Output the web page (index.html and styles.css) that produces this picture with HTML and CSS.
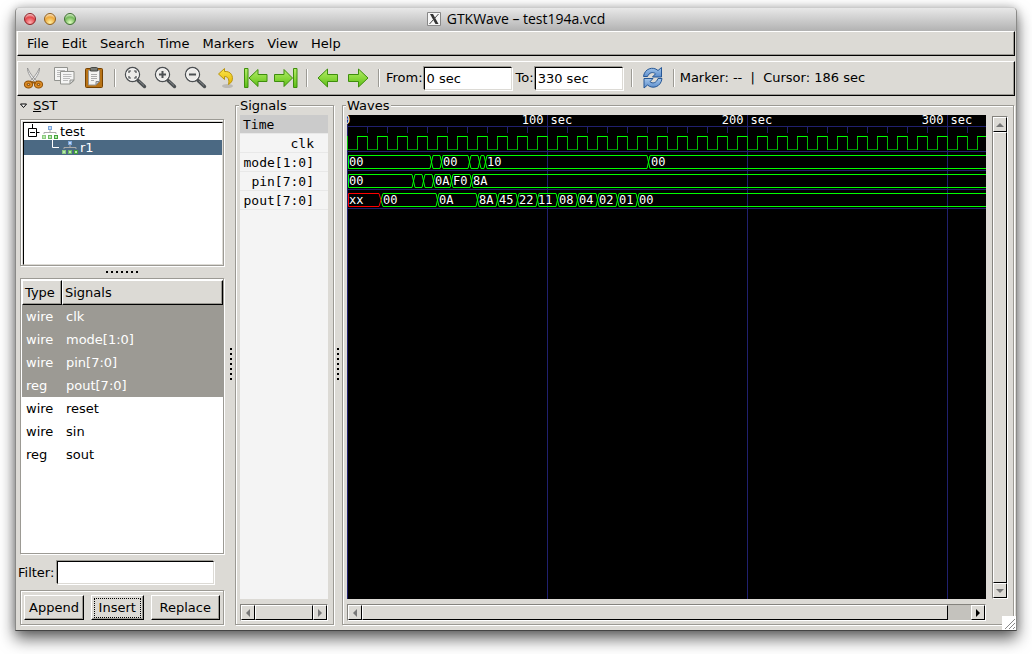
FILE: index.html
```
<!DOCTYPE html>
<html lang="en">
<head>
<meta charset="utf-8">
<title>GTKWave – test194a.vcd</title>
<link rel="stylesheet" href="styles.css">
</head>
<body>
<svg class="defs" width="0" height="0" aria-hidden="true">
  <defs>
    <linearGradient id="green" x1="0" y1="0" x2="0" y2="1"><stop offset="0" stop-color="#b4ec6c"/><stop offset=".5" stop-color="#8ad83c"/><stop offset="1" stop-color="#5cbc18"/></linearGradient>
    <linearGradient id="yellow" x1="0" y1="0" x2="0" y2="1"><stop offset="0" stop-color="#fbe84e"/><stop offset="1" stop-color="#e5b400"/></linearGradient>
    <linearGradient id="blue" x1="0" y1="0" x2="0" y2="1"><stop offset="0" stop-color="#a4c6ea"/><stop offset="1" stop-color="#5b8ccc"/></linearGradient>
    <g id="lens">
      <path d="M14 14.500L20.500 20.500" stroke="#4c5052" stroke-width="3.400" stroke-linecap="round"/>
      <path d="M15 15L20 19.500" stroke="#85898b" stroke-width="1"/>
      <circle cx="8.500" cy="8.500" r="7" fill="#ecebe8" stroke="#4c5052" stroke-width="1.400"/>
      <circle cx="8.500" cy="8.500" r="5.900" fill="none" stroke="#fff" stroke-width=".8"/>
    </g>
    <g id="tree">
      <rect x="6" width="4" height="4" fill="#7ba6dc"/><rect x="7" y="1" width="2" height="2" fill="#c5dcf6"/>
      <path d="M8 4v3M2 8V6.500H14V8" fill="none" stroke="#aaa"/>
      <path d="M0 9h4v4H0z" fill="#8ccb80"/><path d="M6 9h4v4H6z" fill="#6bb860"/><path d="M12 9h4v4h-4z" fill="#43a33b"/>
      <path d="M1 10h2v2H1zM7 10h2v2H7zM13 10h2v2h-2z" fill="#b9e8ae"/>
    </g>
  </defs>
</svg>
<div class="window">
  <header class="titlebar">
    <div class="lights">
      <button class="light red" aria-label="Close"></button>
      <button class="light amber" aria-label="Minimize"></button>
      <button class="light lime" aria-label="Zoom"></button>
    </div>
    <h1 class="title">
      <svg width="14" height="14" viewBox="0 0 14 14" aria-hidden="true"><path d="M.5.500h13v13H.5z" fill="#f6f6f6" stroke="#888"/><path d="M3 2h3l5.500 10h-3z" fill="#333"/><path d="M11.500 2L2.500 12" stroke="#444"/></svg>
      GTKWave – test194a.vcd
    </h1>
  </header>

  <nav class="menubar" aria-label="Menu">
    <button>File</button><button>Edit</button><button>Search</button><button>Time</button><button>Markers</button><button>View</button><button>Help</button>
  </nav>

  <div class="toolbar">
    <button class="tool" aria-label="Cut"><svg viewBox="0 0 24 24"><path d="M5.500 2C5 6 9 13 14 17l1.500-1C12 12 8 8 5.500 2zM17.500 2C18 6 14 13 9 17l-1.500-1C11 12 15 8 17.500 2z" fill="#eee" stroke="#888" stroke-width=".8"/><g fill="none" stroke="#8b4c05" stroke-width="3.600"><ellipse cx="6.500" cy="18.500" rx="2.800" ry="2.200"/><ellipse cx="16.500" cy="18.500" rx="2.800" ry="2.200"/></g><g fill="none" stroke="#d98a25" stroke-width="1.800"><ellipse cx="6.500" cy="18.500" rx="2.800" ry="2.200"/><ellipse cx="16.500" cy="18.500" rx="2.800" ry="2.200"/></g><path d="M9 16l5 1" stroke="#9c5a0c" stroke-width="2"/></svg></button>
    <button class="tool" aria-label="Copy"><svg viewBox="0 0 24 24"><g fill="#f5f5f4" stroke="#92938f"><path d="M2.500 1.500h13v13h-13z"/><path d="M8.500 5.500h13.500v9l-4 3.500H8.500z"/></g><path d="M5 4.500h8M5 6.500h3M5 8.500h3M5 10.500h3M11 8.500h8.500M11 10.500h8.500M11 12.500h7M11 14.500h5" stroke="#bbb"/><path d="M18 18v-4h4z" fill="#ddd" stroke="#92938f"/></svg></button>
    <button class="tool" aria-label="Paste"><svg viewBox="0 0 24 24"><rect x="3.500" y="2.500" width="17" height="19" rx="1" fill="#b87316" stroke="#744102"/><path d="M6.500 4.500h11v11l-3.500 3.500H6.500z" fill="#f4f4f2" stroke="#999"/><path d="M8.500 3.500V2.500q0-1 1-1h5q1 0 1 1v2.500h-7z" fill="#777a75" stroke="#484a47"/><path d="M9 8.500h6M9 10.500h6M9 12.500h6M9 14.500h3" stroke="#aaa"/><path d="M14 19v-3.500h3.500z" fill="#ccc" stroke="#888"/></svg></button>
    <span class="sep"></span>
    <button class="tool" aria-label="Zoom fit"><svg viewBox="0 0 24 24"><use href="#lens"/><path d="M5 7V5H7M10 5h2v2M12 10v2h-2M7 12H5v-2" fill="none" stroke="#4c5052" stroke-width="1.200"/></svg></button>
    <button class="tool" aria-label="Zoom in"><svg viewBox="0 0 24 24"><use href="#lens"/><path d="M5 8.500h7M8.500 5v7" stroke="#4c5052" stroke-width="2"/></svg></button>
    <button class="tool" aria-label="Zoom out"><svg viewBox="0 0 24 24"><use href="#lens"/><path d="M5 8.500h7" stroke="#4c5052" stroke-width="2"/></svg></button>
    <button class="tool" aria-label="Zoom undo"><svg viewBox="0 0 24 24"><ellipse cx="13.500" cy="20" rx="5.500" ry="2" fill="#000" opacity=".15"/><path d="M4.500 8L10.500 2.500V5.500C17 5 19.500 10 18 15q-1 2-3.500 3.500C15.500 14 14.500 10.500 10.500 10.500V13.500z" fill="url(#yellow)" stroke="#b99510"/></svg></button>
    <button class="tool" aria-label="Go to start"><svg viewBox="0 0 24 24"><g fill="url(#green)" stroke="#3e8e0c"><path d="M.5 2.500h3.500v19H.5z"/><path d="M5 12L14 3.500v5h9v7h-9v5z"/></g></svg></button>
    <button class="tool" aria-label="Go to end"><svg viewBox="0 0 24 24"><g fill="url(#green)" stroke="#3e8e0c"><path d="M19.500 2.500H23v19h-3.500z"/><path d="M18.500 12L10 3.500v5H.5v7H10v5z"/></g></svg></button>
    <span class="sep"></span>
    <button class="tool" aria-label="Previous edge"><svg viewBox="0 0 24 24"><path d="M2 12l9.500-9v5.500h10v7h-10V21z" fill="url(#green)" stroke="#3e8e0c"/></svg></button>
    <button class="tool" aria-label="Next edge"><svg viewBox="0 0 24 24"><path d="M22 12l-9.500-9v5.500h-10v7h10V21z" fill="url(#green)" stroke="#3e8e0c"/></svg></button>
    <span class="sep"></span>
    <label for="from">From:</label><input id="from" class="entry time" type="text" value="0 sec">
    <label for="to">To:</label><input id="to" class="entry time" type="text" value="330 sec">
    <span class="sep"></span>
    <button class="tool" aria-label="Reload"><svg viewBox="0 0 24 24"><g fill="url(#blue)" stroke="#275795"><path d="M2.500 10.500C3.500 2.500 12 0 17 4.500L20.500 1.500V11h-9l3-3.200C12 5.500 8 6.500 6.500 10.500z"/><path d="M21 12.500C20 21 11.500 23.500 6.500 19L3 22V12.500h9L9 15.700C11.500 18 15.500 17 17 12.500z"/></g></svg></button>
    <span class="sep"></span>
    <output class="status">Marker: --&nbsp; |&nbsp; Cursor: 186 sec</output>
  </div>

  <main class="workspace">
    <aside class="side">
      <h2 class="sst"><svg width="9" height="6" viewBox="0 0 9 6" aria-hidden="true"><path d="M1.500 1h6L4.500 4.500z" fill="#fff" stroke="#000"/></svg><span><u>S</u>ST</span></h2>
      <div class="frame tree-frame">
        <ul class="tree">
          <li><svg width="12" height="16" viewBox="0 0 12 16" aria-hidden="true"><path d="M4.500 0v4M.5 4.500h8v8h-8zM2 8.500h5M9 8.500h2.500" fill="none" stroke="#000"/></svg><svg width="16" height="13"><use href="#tree"/></svg>test</li>
          <li class="chosen child"><svg width="8" height="16" viewBox="0 0 8 16" aria-hidden="true"><path d="M.5 0v7.500H7" fill="none" stroke="#fff"/></svg><svg width="16" height="13"><use href="#tree"/></svg>r1</li>
        </ul>
      </div>
      <div class="grip across"></div>
      <div class="frame list-frame">
        <table class="list">
          <thead><tr><th class="type">Type</th><th>Signals</th></tr></thead>
          <tbody>
            <tr class="picked"><td>wire</td><td>clk</td></tr>
            <tr class="picked"><td>wire</td><td>mode[1:0]</td></tr>
            <tr class="picked"><td>wire</td><td>pin[7:0]</td></tr>
            <tr class="picked"><td>reg</td><td>pout[7:0]</td></tr>
            <tr><td>wire</td><td>reset</td></tr>
            <tr><td>wire</td><td>sin</td></tr>
            <tr><td>reg</td><td>sout</td></tr>
          </tbody>
        </table>
      </div>
      <div class="filter"><label for="filter">Filter:</label><input id="filter" class="entry" type="text"></div>
      <div class="actions frame">
        <button class="push">Append</button><button class="push focused"><span>Insert</span></button><button class="push">Replace</button>
      </div>
    </aside>

    <div class="grip down"></div>

    <section class="group names-group">
      <h2>Signals</h2>
      <div class="names">
        <div class="name head">Time</div>
        <div class="name">clk</div>
        <div class="name">mode[1:0]</div>
        <div class="name">pin[7:0]</div>
        <div class="name">pout[7:0]</div>
      </div>
      <div class="scroll flat">
        <button class="arrow" aria-label="Scroll left"><svg width="6" height="8"><path d="M5 0v8L1 4z" fill="#777"/></svg></button>
        <span class="thumb"></span>
        <button class="arrow" aria-label="Scroll right"><svg width="6" height="8"><path d="M1 0v8l4-4z" fill="#777"/></svg></button>
      </div>
    </section>

    <div class="grip down"></div>

    <section class="group waves-group">
      <h2>Waves</h2>
      <svg class="waves" role="img" aria-label="Waveforms">
        <defs>
          <pattern id="tick" width="20" height="7" y="11" patternUnits="userSpaceOnUse"><path d="M0 .5h20M.5 0v7" stroke="#20206e"/></pattern>
          <pattern id="clock" width="20" height="15" y="21" patternUnits="userSpaceOnUse"><path d="M0 13.500h11" stroke="#008e00"/><path d="M10.500 0v14M.5 0v14" stroke="#00c000"/><path d="M10 .5h10.500" stroke="#0f0"/></pattern>
          <pattern id="grid" width="200" height="20" patternUnits="userSpaceOnUse"><path d="M.5 0v20" stroke="#20206e"/></pattern>
        </defs>
        <rect width="100%" height="100%" fill="#000"/>
        <rect width="100%" height="100%" fill="url(#grid)"/>
        <rect y="11" width="100%" height="7" fill="url(#tick)"/>
        <path d="M0 36.500H4000M0 55.500H4000M0 74.500H4000M0 93.500H4000" stroke="#20206e"/>
        <rect y="21" width="100%" height="14" fill="url(#clock)"/>
        <g class="bus">
          <path d="M1.500 53.500V40.500H83l3 13H93l3-13H121l3 13H131l3-13H137l3 13H300l3-13H4000"/>
          <path d="M1.500 53.500H83l3-13H93l3 13H121l3-13H131l3 13H137l3-13H300l3 13H4000"/>
          <path d="M1.500 72.500V59.500H65l3 13H75l3-13H85l3 13H103l3-13H123l3 13H4000"/>
          <path d="M1.500 72.500H65l3-13H75l3 13H85l3-13H103l3 13H123l3-13H4000"/>
          <path d="M34 85l2-6.500H89l3 13H129l3-13H149l3 13H169l3-13H189l3 13H209l3-13H229l3 13H249l3-13H269l3 13H289l3-13H4000"/>
          <path d="M34 85l2 6.500H89l3-13H129l3 13H149l3-13H169l3 13H189l3-13H209l3 13H229l3-13H249l3 13H269l3-13H289l3 13H4000"/>
          <path class="unknown" d="M1.500 78.500H32l2 6.500-2 6.500H1.500z"/>
        </g>
        <g class="values">
          <text x="-4" y="9">0</text>
          <text class="mid" x="200" y="9">100 sec</text>
          <text class="mid" x="400" y="9">200 sec</text>
          <text class="mid" x="600" y="9">300 sec</text>
          <text x="2" y="51">00</text><text x="96" y="51">00</text><text x="140" y="51">10</text><text x="304" y="51">00</text>
          <text x="2" y="70">00</text><text x="88" y="70">0A</text><text x="106" y="70">F0</text><text x="126" y="70">8A</text>
          <text x="2" y="89">xx</text><text x="36" y="89">00</text><text x="92" y="89">0A</text><text x="132" y="89">8A</text><text x="152" y="89">45</text><text x="172" y="89">22</text><text x="191" y="89">11</text><text x="212" y="89">08</text><text x="232" y="89">04</text><text x="252" y="89">02</text><text x="272" y="89">01</text><text x="292" y="89">00</text>
        </g>
      </svg>
      <div class="scroll upright">
        <button class="arrow" aria-label="Scroll up"><svg width="8" height="6"><path d="M0 5h8L4 1z" fill="#777"/></svg></button>
        <span class="thumb"></span>
        <button class="arrow" aria-label="Scroll down"><svg width="8" height="6"><path d="M0 1h8L4 5z" fill="#777"/></svg></button>
      </div>
      <div class="scroll flat">
        <button class="arrow" aria-label="Scroll left"><svg width="6" height="8"><path d="M5 0v8L1 4z" fill="#777"/></svg></button>
        <span class="thumb"></span><span class="trough"></span>
        <button class="arrow" aria-label="Scroll right"><svg width="6" height="8"><path d="M1 0v8l4-4z" fill="#000"/></svg></button>
      </div>
    </section>
  </main>
  <svg class="resizer" width="14" height="14" viewBox="0 0 14 14" aria-hidden="true"><path d="M0 0h14v14H0z" fill="#fff"/><path d="M3 13L13 3M7 13l6-6M11 13l2-2" stroke="#888"/></svg>
</div>
</body>
</html>
```
FILE: styles.css
```
* { box-sizing: border-box; }

body {
  display: flex;
  flex-direction: column;
  min-height: 100vh;
  margin: 0;
  padding: 7px 15px 23px;
  overflow: hidden;
  background: #fff;
  color: #000;
  font: 13px/16px "DejaVu Sans", sans-serif;
}

button, input { font: inherit; color: inherit; margin: 0; }
button { padding: 0; border: 0; background: none; }
h1, h2, ul { margin: 0; padding: 0; font: inherit; }
svg { flex: none; display: block; }
.defs { position: absolute; }

.window {
  position: relative;
  flex: 1;
  display: flex;
  flex-direction: column;
  border: 1px solid #8a8a88;
  border-top-color: #ccc;
  border-bottom-color: #444;
  border-radius: 5px 5px 0 0;
  background: #dcdad5;
  box-shadow: 0 8px 16px rgba(0, 0, 0, .6), 0 0 8px rgba(0, 0, 0, .2);
}

.titlebar {
  display: grid;
  grid-template-columns: 1fr auto 1fr;
  align-items: center;
  height: 23px;
  padding: 0 8px 1px;
  border-radius: 4px 4px 0 0;
  background: linear-gradient(#e8e8e8, #b2b2b2);
}
.lights { display: flex; gap: 8px; }
.light {
  width: 12px;
  height: 12px;
  border: 1px solid;
  border-radius: 50%;
}
.red { background: radial-gradient(circle at 50% 85%, #ffb0b0, #e2464c 55%, #f7c8c8 85%); border-color: #8e2026; }
.amber { background: radial-gradient(circle at 50% 85%, #fff0a0, #eda83c 55%, #fbe4c0 85%); border-color: #92601c; }
.lime { background: radial-gradient(circle at 50% 85%, #e0ffc0, #75b85c 55%, #d4efc8 85%); border-color: #3d6e30; }
.title {
  display: flex;
  align-items: center;
  gap: 6px;
  font: 14px/20px "Open Sans", sans-serif;
}

.menubar, .toolbar {
  display: flex;
  align-items: center;
  margin: 0 1px;
  border: 1px solid;
  border-color: #fff #000 #000 #fff;
  box-shadow: inset -1px -1px #9c9a94;
}
.menubar { height: 25px; padding: 0 2px; }
.menubar button { padding: 0 6px 0 7px; }
.toolbar { height: 35px; margin-top: 5px; padding: 0 1px 1px; }
.tool { display: grid; place-items: center; width: 30px; height: 30px; }
.tool svg { width: 24px; height: 24px; }
.sep {
  width: 2px;
  height: 18px;
  margin: 0 5px;
  border-left: 1px solid #9c9a94;
  border-right: 1px solid #fff;
}
.entry {
  height: 23px;
  padding: 0 3px;
  border: 1px solid;
  border-color: #000 #dcdad5 #dcdad5 #000;
  border-radius: 0;
  outline: 0;
  background: #fff;
  box-shadow: 1px 1px #fff, -1px -1px #9c9a94;
}
.time { width: 88px; margin-right: 3px; padding: 0 2px; }
.toolbar label { padding: 0 1px; }

.workspace { flex: 1; display: flex; padding: 2px 2px 5px 1px; }
.side { width: 210px; display: flex; flex-direction: column; }
.sst { display: flex; align-items: center; gap: 5px; height: 16px; padding-left: 2px; }
.frame {
  margin: 0 3px;
  border: 1px solid #9c9a94;
  box-shadow: inset 1px 1px #fff, 1px 1px #fff;
}
.tree-frame { height: 147px; margin-top: 5px; padding: 2px 0 0 2px; display: flex; }
.tree {
  flex: 1;
  padding-top: 1px;
  border: 1px solid;
  border-color: #000 #dcdad5 #dcdad5 #000;
  background: #fff;
  list-style: none;
}
.tree li { display: flex; align-items: center; gap: 2px; height: 16px; padding-left: 4px; }
.tree .child { padding-left: 28px; height: 15px; }
.chosen { background: #4b6983; color: #fff; }

.grip {
  background: radial-gradient(circle at 2px 2px, #000 1px, transparent 1px) 0 0 / 5px 5px;
}
.across { width: 34px; height: 4px; margin: 4px auto; }
.down { align-self: center; width: 4px; height: 34px; margin: 4px 2px 0; }

.list-frame { flex: 1; padding: 1px 0 1px 1px; background: #fff; }
.list { width: 100%; border-collapse: separate; border-spacing: 0; }
.list th {
  height: 25px;
  padding: 0 2px;
  border: 1px solid;
  border-color: #fff #000 #000 #fff;
  background: #dcdad5;
  box-shadow: inset -1px -1px #9c9a94;
  font-weight: normal;
  text-align: left;
}
.list .type { width: 40px; }
.list td { height: 23px; padding: 0 4px; }
.picked { background: #9c9a94; color: #fff; }
.filter { display: flex; align-items: center; gap: 3px; margin-top: 7px; padding-left: 1px; }
.filter .entry { width: 157px; }
.actions { display: flex; justify-content: space-between; margin-top: 6px; padding: 4px 3px; }
.push {
  height: 25px;
  padding: 0 4px;
  border: 1px solid;
  border-color: #fff #000 #000 #fff;
  box-shadow: inset -1px -1px #9c9a94;
}
.push:last-child { padding: 0 8px; }
.focused { padding: 0 2px; }
.focused span { display: block; padding: 1px 4px; border: 1px dotted #000; }

.group {
  display: grid;
  grid-template-rows: auto 1fr 17px;
  row-gap: 5px;
  margin-top: 7px;
  padding: 0 5px 3px 4px;
  border: 1px solid #9c9a94;
  box-shadow: inset 1px 1px #fff, 1px 1px #fff;
}
.group h2 {
  justify-self: start;
  height: 9px;
  margin: -7px 0 -5px -1px;
  padding: 0 2px 0 1px;
  background: #dcdad5;
  line-height: 14px;
}
.names-group { width: 99px; }
.names {
  margin-top: 4px;
  background: #f4f4f4;
  font-family: "DejaVu Sans Mono", monospace;
}
.name {
  height: 19px;
  padding: 0 14px 0 3px;
  border-bottom: 1px solid #e8e8e8;
  line-height: 20px;
  text-align: right;
}
.head { background: #cbcbcb; text-align: left; }

.waves-group { flex: 1; grid-template-columns: 1fr 16px; column-gap: 6px; }
.waves-group h2 { grid-column: 1 / 3; }
.waves { width: 100%; height: auto; min-height: 0; margin-top: 4px; overflow: hidden; align-self: stretch; }
.bus path { fill: none; stroke: #0f0; }
.bus .unknown { stroke: #f00; }
.values { fill: #fff; font: 12px "DejaVu Sans Mono", monospace; }
.mid { text-anchor: middle; }

.scroll {
  display: flex;
  border: 1px solid;
  border-color: #85837e #fff #fff #85837e;
  background: #c4c2bd;
}
.upright { flex-direction: column; margin-top: 5px; }
.arrow, .thumb {
  border: 1px solid;
  border-color: #fff #000 #000 #fff;
  background: #dcdad5;
}
.arrow { display: grid; place-items: center; width: 14px; height: 15px; }
.thumb { flex: 1; }
.trough { width: 23px; }

.resizer { position: absolute; right: 0; bottom: 0; }
```
